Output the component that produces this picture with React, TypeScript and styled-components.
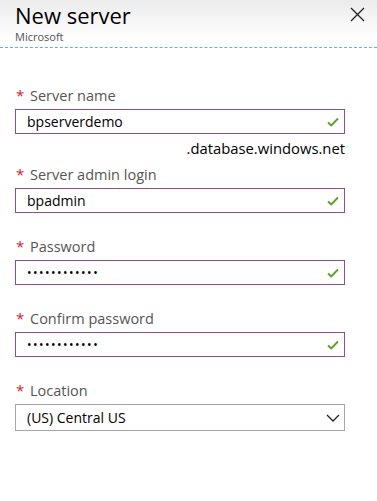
import React from 'react';
import styled, { createGlobalStyle } from 'styled-components';

const GlobalStyle = createGlobalStyle`
    body {
        margin: 0;
        background: #fff;
        font-family: 'Open Sans', 'Liberation Sans', sans-serif;
    }
`;

const fields = [
    { label: 'Server name', value: 'bpserverdemo', suffix: '.database.windows.net' },
    { label: 'Server admin login', value: 'bpadmin' },
    { label: 'Password', value: '••••••••••••', secret: true },
    { label: 'Confirm password', value: '••••••••••••', secret: true },
];

const Panel = styled.div`
    width: 377px;
    height: 501px;
    background: linear-gradient(#ebebeb 0px, #ffffff 40px);
`;

const Header = styled.div`
    display: flex;
    justify-content: space-between;
    align-items: flex-start;
    padding: 0 12px 0 15px;
    height: 47px;
    border-bottom: 1px dashed #5bb8c4;
`;

const Title = styled.h1`
    margin: 0;
    font-size: 22px;
    font-weight: 400;
    line-height: 30px;
    color: #000;
`;

const Subtitle = styled.div`
    font-size: 11px;
    line-height: 15px;
    color: #555;
    margin-top: -1px;
`;

const Close = styled.button`
    margin-top: 7px;
    padding: 0;
    border: 0;
    background: none;
    width: 15px;
    height: 15px;
    cursor: pointer;
`;

const Form = styled.div`
    display: flex;
    flex-direction: column;
    padding: 37px 32px 0 15px;
`;

const Field = styled.div<{ $last?: boolean }>`
    display: flex;
    flex-direction: column;
    margin-bottom: ${p => (p.$last ? 0 : '23px')};
`;

const Label = styled.div`
    display: flex;
    align-items: baseline;
    font-size: 14.5px;
    line-height: 20px;
    color: #555;
    margin-bottom: 3px;
`;

const Star = styled.span`
    color: #d3202e;
    font-size: 15px;
    width: 14px;
    margin-left: 1px;
`;

const Box = styled.div<{ $kind: 'valid' | 'select' }>`
    display: flex;
    align-items: center;
    justify-content: space-between;
    height: ${p => (p.$kind === 'select' ? '27px' : '25px')};
    box-sizing: border-box;
    border: 1px solid ${p => (p.$kind === 'valid' ? '#8c4f8c' : '#a6a6a6')};
    padding: 0 4px 0 11px;
    color: #000;
`;

const Value = styled.span<{ $secret?: boolean }>`
    font-size: ${p => (p.$secret ? '12px' : '14px')};
    letter-spacing: ${p => (p.$secret ? '1.5px' : 'normal')};
`;

const Suffix = styled.div`
    align-self: flex-end;
    font-size: 14.8px;
    line-height: 18px;
    color: #000;
    margin-top: 5px;
    margin-bottom: -16px;
`;

const Check = () => (
    <svg width="14" height="12" viewBox="0 0 14 12">
        <polyline points="2,6.5 5.2,9.5 12,2.5" fill="none" stroke="#5ea02a" strokeWidth="1.9" />
    </svg>
);

const Chevron = () => (
    <svg width="14" height="10" viewBox="0 0 14 10">
        <polyline points="1,2 7,8 13,2" fill="none" stroke="#222" strokeWidth="1.3" />
    </svg>
);

const App = () => (
    <Panel>
        <GlobalStyle />
        <Header>
            <div>
                <Title>New server</Title>
                <Subtitle>Microsoft</Subtitle>
            </div>
            <Close aria-label="Close">
                <svg width="15" height="15" viewBox="0 0 15 15">
                    <path d="M1 1 L14 14 M14 1 L1 14" stroke="#222" strokeWidth="1.3" />
                </svg>
            </Close>
        </Header>
        <Form>
            {fields.map(f => (
                <Field key={f.label}>
                    <Label>
                        <Star>*</Star>
                        {f.label}
                    </Label>
                    <Box $kind="valid">
                        <Value $secret={f.secret}>{f.value}</Value>
                        <Check />
                    </Box>
                    {f.suffix && <Suffix>{f.suffix}</Suffix>}
                </Field>
            ))}
            <Field $last>
                <Label>
                    <Star>*</Star>
                    Location
                </Label>
                <Box $kind="select">
                    <Value>(US) Central US</Value>
                    <Chevron />
                </Box>
            </Field>
        </Form>
    </Panel>
);

export default App;
